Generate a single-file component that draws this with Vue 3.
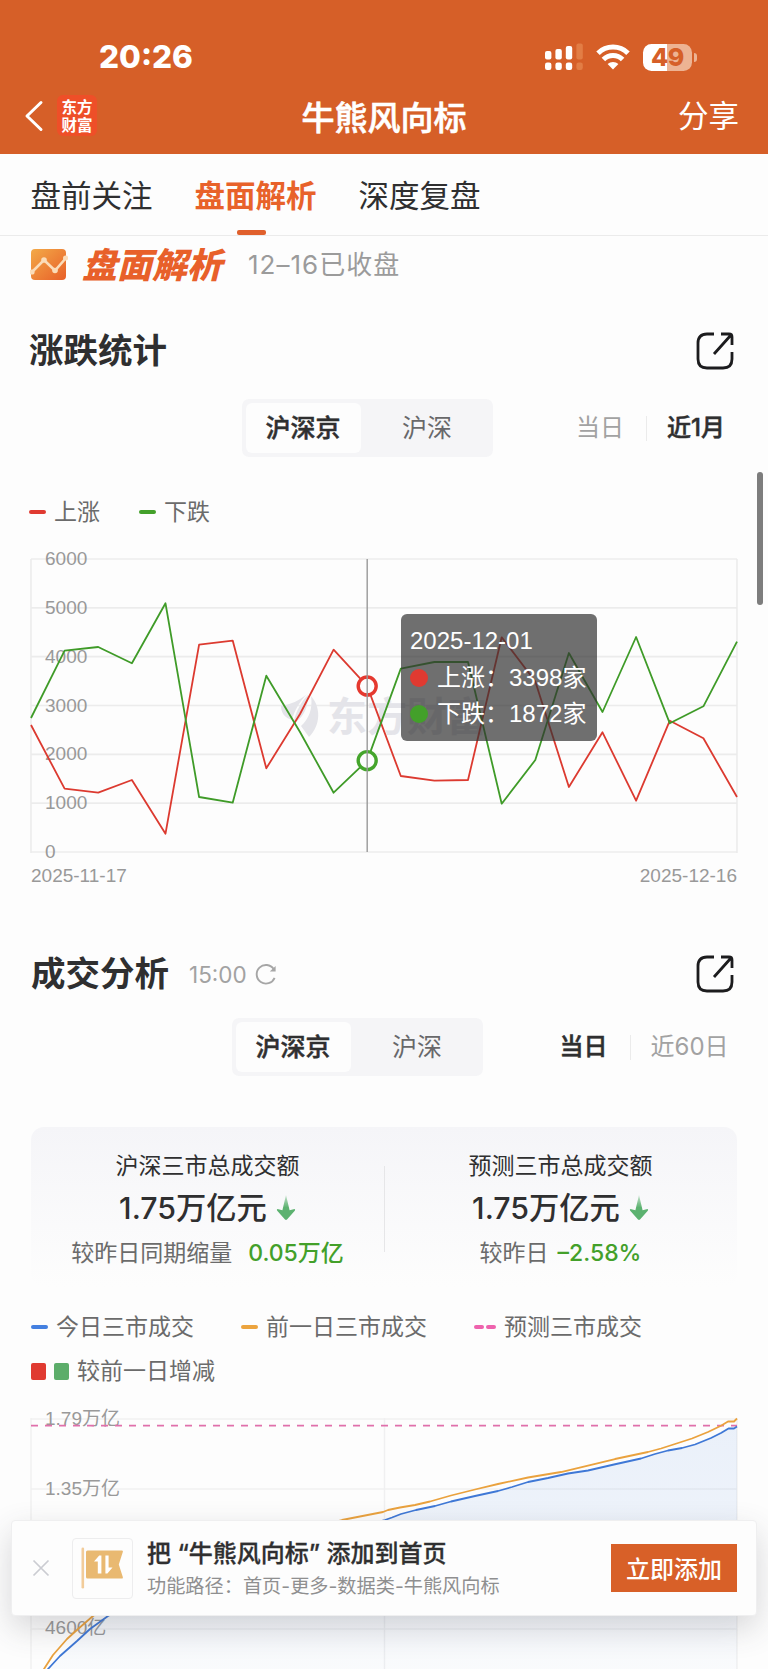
<template>
  <div class="page">
    <header class="header">
      <div class="status-bar">
        <span class="clock">20:26</span>
        <div class="status-icons">
          <svg class="signal" width="39" height="28" viewBox="0 0 39 28">
            <g fill="#fff">
              <rect x="0" y="8" width="6.4" height="8.5" rx="2" />
              <rect x="10.4" y="6" width="6.4" height="10.5" rx="2" />
              <rect x="20.8" y="3" width="6.4" height="13.5" rx="2" />
              <rect x="0" y="19.5" width="6.4" height="7.5" rx="2.2" />
              <rect x="10.4" y="19.5" width="6.4" height="7.5" rx="2.2" />
              <rect x="20.8" y="19.5" width="6.4" height="7.5" rx="2.2" />
            </g>
            <g fill="#e27d45">
              <rect x="31.4" y="0.5" width="6.4" height="16" rx="2" />
              <rect x="31.4" y="19.5" width="6.4" height="7.5" rx="2.2" />
            </g>
          </svg>
          <svg class="wifi" width="34" height="26" viewBox="0 0 34 26">
            <g fill="none" stroke="#fff" stroke-width="5">
              <path d="M2 9.2 A21.5 21.5 0 0 1 32 9.2" />
              <path d="M7.4 15.4 A13.6 13.6 0 0 1 26.6 15.4" />
            </g>
            <path d="M17 25.4 L11.6 20 A8 8 0 0 1 22.4 20 Z" fill="#fff" />
          </svg>
          <div class="battery">
            <span class="battery-text">49</span>
          </div>
          <span class="battery-nub"></span>
        </div>
      </div>
      <div class="nav-bar">
        <div class="nav-left">
          <svg width="20" height="32" viewBox="0 0 20 32">
            <path d="M17 2.5 L3 16 L17 29.5" fill="none" stroke="#fff" stroke-width="3" stroke-linecap="round" stroke-linejoin="round" />
          </svg>
          <div class="logo"><span>东方</span><span>财富</span></div>
        </div>
        <h1 class="nav-title">牛熊风向标</h1>
        <span class="nav-share">分享</span>
      </div>
    </header>

    <nav class="tabs">
      <span
        v-for="tab in tabs"
        :key="tab"
        class="tab"
        :class="{ 'is-active': tab === activeTab }"
        @click="activeTab = tab"
      >{{ tab }}</span>
    </nav>

    <div class="brand">
      <svg class="brand-icon" width="38" height="32" viewBox="0 0 38 32">
        <defs>
          <linearGradient id="brandFill" x1="0" y1="0" x2="1" y2="1">
            <stop offset="0" stop-color="#f3aa48" />
            <stop offset="1" stop-color="#e85f28" />
          </linearGradient>
        </defs>
        <rect x="1" y="0" width="35" height="31" rx="4" fill="url(#brandFill)" />
        <path d="M2 23 L14 11 L25 21.5 L36 9" fill="none" stroke="#fbdcb8" stroke-width="2.6" />
        <g fill="#fbdcb8">
          <circle cx="2" cy="23" r="2.6" />
          <circle cx="14" cy="11" r="2.8" />
          <circle cx="25" cy="21.5" r="2.8" />
          <circle cx="35.6" cy="9" r="2.6" />
        </g>
      </svg>
      <span class="brand-name">盘面解析</span>
      <span class="brand-date">12–16已收盘</span>
    </div>

    <!-- 涨跌统计 -->
    <section class="panel">
      <div class="panel-head">
        <h2>涨跌统计</h2>
        <svg class="open-icon" width="38" height="38" viewBox="0 0 38 38">
          <path d="M18 2 H11 Q2 2 2 11 V27 Q2 36 11 36 H27 Q36 36 36 27 V20 M25 2 H33 Q36 2 36 5 V13 M35 3 L18 22" />
        </svg>
      </div>
      <div class="controls">
        <div class="segment">
          <span class="is-active">沪深京</span>
          <span>沪深</span>
        </div>
        <div class="range">
          <span>当日</span>
          <i></i>
          <span class="is-active">近1月</span>
        </div>
      </div>
      <div class="legend legend-updown">
        <span class="legend-item"><i class="dash red"></i>上涨</span>
        <span class="legend-item"><i class="dash green"></i>下跌</span>
      </div>
      <div class="chart">
        <svg width="768" height="350" viewBox="0 0 768 350">
          <g stroke="#ececec" stroke-width="1.6">
            <line v-for="n in 7" :key="n" x1="31" x2="737" :y1="yAt((n - 1) * 1000)" :y2="yAt((n - 1) * 1000)" />
            <line x1="31" x2="31" y1="18" y2="312" />
            <line x1="737" x2="737" y1="18" y2="312" />
          </g>
          <g fill="#e4e4e9">
            <path d="M281 165 C290 164 300 159 307 153 C300 160 294 170 292 179 C285 177 281 172 281 165 Z" />
            <path d="M308 154 C308 166 304 175 296 181 L294 180 C296 170 301 161 308 154 Z" />
            <path d="M311 155 C321 166 321 184 309 196 L301 185 C309 178 313 167 311 155 Z" />
            <text class="watermark" x="327" y="190">东方财富</text>
          </g>
          <g class="axis-label">
            <text v-for="n in 7" :key="n" x="45" :y="yAt((n - 1) * 1000) + 6">{{ (n - 1) * 1000 }}</text>
            <text x="31" y="341">2025-11-17</text>
            <text x="737" y="341" text-anchor="end">2025-12-16</text>
          </g>
          <polyline class="series" :points="toPoints(up)" stroke="#dc3a30" />
          <polyline class="series" :points="toPoints(down)" stroke="#3f9b28" />
          <circle :cx="xAt(10)" :cy="yAt(up[10])" r="9" fill="#fdfdfd" stroke="#e5392f" stroke-width="3.4" />
          <circle :cx="xAt(10)" :cy="yAt(down[10])" r="9" fill="#fdfdfd" stroke="#45a52c" stroke-width="3.4" />
          <line :x1="xAt(10)" :x2="xAt(10)" y1="18" y2="311" stroke="#999" stroke-width="1.4" />
        </svg>
        <div class="tooltip">
          <div class="tooltip-date">2025-12-01</div>
          <div class="tooltip-row"><i class="dot red"></i>上涨：{{ up[10] }}家</div>
          <div class="tooltip-row"><i class="dot green"></i>下跌：{{ down[10] }}家</div>
        </div>
      </div>
    </section>

    <!-- 成交分析 -->
    <section class="panel panel-volume">
      <div class="panel-head">
        <h2>成交分析</h2>
        <span class="time">15:00</span>
        <svg class="refresh" width="24" height="24" viewBox="0 0 24 24">
          <path d="M19.8 7.2 A9.3 9.3 0 1 0 20.6 15.8" fill="none" stroke="#a6a6a6" stroke-width="1.9" />
          <path d="M21.6 4 V9.6 H15.8 Z" fill="#a6a6a6" />
        </svg>
        <svg class="open-icon" width="38" height="38" viewBox="0 0 38 38">
          <path d="M18 2 H11 Q2 2 2 11 V27 Q2 36 11 36 H27 Q36 36 36 27 V20 M25 2 H33 Q36 2 36 5 V13 M35 3 L18 22" />
        </svg>
      </div>
      <div class="controls">
        <div class="segment">
          <span class="is-active">沪深京</span>
          <span>沪深</span>
        </div>
        <div class="range">
          <span class="is-active">当日</span>
          <i></i>
          <span>近60日</span>
        </div>
      </div>

      <div class="summary">
        <div v-for="card in summary" :key="card.title" class="summary-col">
          <div class="summary-title">{{ card.title }}</div>
          <div class="summary-value">
            {{ card.value }}
            <svg width="20" height="26" viewBox="0 0 20 26">
              <defs>
                <linearGradient id="arrowFill" x1="0" y1="0" x2="0" y2="1">
                  <stop offset="0" stop-color="#5cb270" stop-opacity="0.3" />
                  <stop offset="0.5" stop-color="#5cb270" />
                </linearGradient>
              </defs>
              <path d="M10 0 L13.6 15.2 L18.6 14 Q19.6 14.5 18.8 15.8 L11 24.6 Q10 25.5 9 24.6 L1.2 15.8 Q0.4 14.5 1.4 14 L6.4 15.2 Z" fill="url(#arrowFill)" />
            </svg>
          </div>
          <div class="summary-note" :style="{ gap: card.gap + 'px' }">{{ card.note }}<b>{{ card.diff }}</b></div>
        </div>
      </div>

      <div class="legend legend-volume">
        <span class="legend-item"><i class="dash blue"></i>今日三市成交</span>
        <span class="legend-item"><i class="dash orange"></i>前一日三市成交</span>
        <span class="legend-item"><i class="dash pink"></i><i class="dash pink"></i>预测三市成交</span>
        <span class="legend-item"><i class="block red"></i><i class="block green"></i>较前一日增减</span>
      </div>

      <svg class="volume-chart" width="768" height="270" viewBox="0 1399 768 270">
        <defs>
          <linearGradient id="areaFill" x1="0" y1="1419" x2="0" y2="1690" gradientUnits="userSpaceOnUse">
            <stop offset="0" stop-color="#3f7ddb" stop-opacity="0.1" />
            <stop offset="0.4" stop-color="#3f7ddb" stop-opacity="0.08" />
            <stop offset="1" stop-color="#3f7ddb" stop-opacity="0.01" />
          </linearGradient>
        </defs>
        <g stroke="#f0f0f1" stroke-width="1.5">
          <line v-for="y in [1419, 1489, 1559, 1629]" :key="y" x1="31" x2="737" :y1="y" :y2="y" />
          <line v-for="x in [31, 384.5, 737]" :key="x" :x1="x" :x2="x" y1="1418" y2="1669" />
        </g>
        <g class="axis-label">
          <text x="45" y="1425">1.79万亿</text>
          <text x="45" y="1495">1.35万亿</text>
          <text x="45" y="1634">4600亿</text>
        </g>
        <polygon :points="today + ' 737,1690 31,1690'" fill="url(#areaFill)" />
        <line x1="31" x2="737" y1="1425.6" y2="1425.6" stroke="#e070ab" stroke-width="1.9" stroke-dasharray="7 7" />
        <polyline class="series" :points="previous" stroke="#eaa23e" />
        <polyline class="series" :points="today" stroke="#3f78d6" />
      </svg>
    </section>

    <div class="scrollbar"></div>

    <!-- 底部添加提示 -->
    <div class="banner">
      <svg class="banner-close" width="18" height="18" viewBox="0 0 18 18">
        <path d="M1.5 1.5 L16.5 16.5 M16.5 1.5 L1.5 16.5" stroke="#cbccd2" stroke-width="1.7" />
      </svg>
      <div class="banner-icon">
        <svg width="44" height="42" viewBox="0 0 44 42">
          <rect x="0.5" y="0.5" width="2.6" height="41" rx="1.3" fill="#f2cc9a" />
          <path d="M6.5 3.5 H41 Q42.4 3.5 41.8 5 L37.8 17.5 L41.8 30 Q42.4 31.5 41 31.5 H6.5 Q5 31.5 5 30 V5 Q5 3.5 6.5 3.5 Z" fill="#e9b971" />
          <path d="M13 14.5 L18.2 8.5 H20.4 V26.5 H16.8 V14.5 Z M24.4 8.5 H27.6 V20.5 H31.5 L26.4 26.5 H24.4 Z" fill="#fff" />
        </svg>
      </div>
      <div class="banner-text">
        <div class="banner-title">把 “牛熊风向标” 添加到首页</div>
        <div class="banner-path">功能路径：首页-更多-数据类-牛熊风向标</div>
      </div>
      <button class="banner-btn">立即添加</button>
    </div>
  </div>
</template>

<script setup>
import { ref } from 'vue';

const tabs = ['盘前关注', '盘面解析', '深度复盘'];
const activeTab = ref('盘面解析');

// 近1月每日涨跌家数
const up = [2601, 1296, 1214, 1475, 375, 4246, 4328, 1714, 2826, 4143, 3398, 1556, 1460, 1475, 4397, 3492, 1331, 2451, 1051, 2689, 2329, 1126];
const down = [2744, 4123, 4198, 3865, 5093, 1126, 1010, 3611, 2458, 1214, 1872, 3755, 3891, 3891, 989, 1884, 4075, 2867, 4403, 2636, 2984, 4307];

const xAt = (i) => 31 + (i * 706) / 21;
const yAt = (v) => 311 - (v / 6000) * 293;
const toPoints = (list) => list.map((v, i) => `${xAt(i).toFixed(1)},${yAt(v).toFixed(1)}`).join(' ');

const summary = [
  { title: '沪深三市总成交额', value: '1.75万亿元', note: '较昨日同期缩量', diff: '0.05万亿', gap: 16 },
  { title: '预测三市总成交额', value: '1.75万亿元', note: '较昨日', diff: '–2.58%', gap: 9 },
];

const previous = '31,1690 44,1669 53,1655 67,1639 78,1629 93,1616 130,1594 200,1562 270,1538 342,1520 383,1512 388,1510 400,1507.5 415,1505 430,1501.5 451,1495.5 475,1489.5 498,1484 528,1477.5 561,1472 588,1465.5 615,1459 648,1452 661,1448.5 675,1444 692,1438.5 708,1432 721,1425.7 728,1421.5 734,1421.5 737,1418.5';
const today = '31,1690 48,1669 60,1656 77,1641 90,1629 108,1616 150,1594 220,1566 300,1541 385,1520 392,1517.5 401,1514 416,1510 435,1506 451,1501.5 475,1496 498,1491 512,1487 528,1482 548,1478 568,1473.5 588,1470.5 614,1464.5 641,1458.5 655,1454 668,1450.5 682,1448 695,1444.5 711,1438 721,1433 728.5,1428.5 734,1428.5 737,1426.5';
</script>

<style>
body {
  background: #fdfdfd;
}
</style>

<style scoped>
.page {
  position: relative;
  width: 768px;
  height: 1669px;
  overflow: hidden;
  background: #fdfdfd;
  color: #2f2f30;
  font-family: Inter, "Noto Sans CJK SC", sans-serif;
}

.header {
  height: 154px;
  background: #d65f28;
  color: #fff;
}

.status-bar {
  display: flex;
  justify-content: space-between;
  padding: 37px 71px 0 99px;
  height: 40px;
}

.clock {
  font-size: 31.5px;
  font-weight: 800;
  line-height: 40px;
}

.status-icons {
  display: flex;
  align-items: center;
}

.wifi {
  margin: 0 13px 0 12px;
}

.battery {
  width: 49px;
  height: 27px;
  border-radius: 8.5px;
  background: linear-gradient(90deg, #fff 49%, #edb393 49%);
}

.battery-text {
  display: block;
  text-align: center;
  font-size: 25px;
  font-weight: 800;
  line-height: 27px;
  letter-spacing: -0.5px;
  color: #d65f28;
}

.battery-nub {
  width: 3px;
  height: 9px;
  margin-left: 2px;
  border-radius: 0 4px 4px 0;
  background: #edb393;
}

.nav-bar {
  display: grid;
  grid-template-columns: 1fr auto 1fr;
  align-items: center;
  height: 77px;
  padding: 0 29px 0 24px;
}

.nav-left {
  display: flex;
  align-items: center;
  gap: 13px;
}

.logo {
  display: flex;
  flex-direction: column;
  align-items: center;
  justify-content: center;
  width: 40px;
  height: 41px;
  border-radius: 6px;
  background: #ee4f28;
  font-family: "Noto Sans CJK SC", sans-serif;
  font-size: 15.5px;
  font-weight: 700;
  line-height: 17.5px;
}

.nav-title {
  margin: 5px -2.5px 0 2.5px;
  font-size: 33px;
  font-weight: 500;
  line-height: 40px;
  -webkit-text-stroke: 0.6px currentColor;
}

.nav-share {
  justify-self: end;
  font-size: 30.5px;
  line-height: 40px;
}

.tabs {
  display: flex;
  gap: 42px;
  height: 81px;
  padding-left: 30.5px;
  border-bottom: 1px solid #ebebeb;
}

.tab {
  position: relative;
  font-size: 30.5px;
  line-height: 84px;
}

.tab.is-active {
  color: #e8622a;
  font-weight: 700;
}

.tab.is-active::after {
  content: '';
  position: absolute;
  left: 42px;
  bottom: 0;
  width: 29px;
  height: 5px;
  border-radius: 2px;
  background: #e0602c;
}

.brand {
  display: flex;
  align-items: center;
  height: 57px;
  padding-left: 30px;
}

.brand-name {
  margin-left: 14px;
  font-size: 35px;
  font-weight: 900;
  font-style: italic;
  line-height: 40px;
  color: #e8602a;
}

.brand-date {
  margin-left: 26px;
  font-size: 26px;
  line-height: 40px;
  letter-spacing: 1px;
  color: #9b9b9b;
}

.panel-head {
  display: flex;
  align-items: center;
  height: 40px;
  padding: 38px 34px 0 29px;
}

.panel-head h2 {
  margin: 0;
  font-size: 34.5px;
  font-weight: 700;
  line-height: 40px;
}

.open-icon {
  margin-left: auto;
  fill: none;
  stroke: #1c1c1e;
  stroke-width: 2.8;
}

.controls {
  display: flex;
  height: 58px;
  margin-top: 28px;
  padding-left: 241.5px;
  font-size: 25px;
}

.segment {
  display: flex;
  width: 243px;
  height: 50px;
  padding: 4px;
  border-radius: 7px;
  background: #f5f5f7;
  line-height: 50px;
  text-align: center;
  color: #68686a;
}

.segment span {
  width: 115px;
}

.segment span + span {
  margin-left: 9px;
}

.segment .is-active {
  border-radius: 6px;
  background: #fdfdfd;
  color: #2f2f30;
  font-weight: 500;
  -webkit-text-stroke: 0.5px currentColor;
}

.range {
  display: flex;
  align-items: center;
  margin-left: 83.5px;
  font-size: 24px;
  line-height: 58px;
  color: #a2a2a2;
}

.range i {
  width: 1px;
  height: 25px;
  margin: 0 20px 0 22px;
  background: #ebebeb;
}

.range .is-active {
  color: #2f2f30;
  font-weight: 500;
  -webkit-text-stroke: 0.5px currentColor;
}

.legend {
  display: flex;
  font-size: 23px;
  line-height: 44px;
  color: #6b6b6b;
}

.legend-item {
  display: flex;
  align-items: center;
}

.dash {
  width: 17px;
  height: 4.5px;
  margin-right: 8px;
  border-radius: 2px;
}

.legend-updown {
  gap: 39px;
  margin-top: 33px;
  padding-left: 29px;
}

.red {
  background: #e03a31;
}

.green {
  background: #43a02a;
}

.blue {
  background: #4480e0;
}

.orange {
  background: #eca43e;
}

.pink {
  width: 10px;
  background: #ee62ad;
}

.pink:first-child {
  margin-right: 2px;
}

.block {
  width: 15px;
  height: 17px;
  margin-right: 8px;
  border-radius: 2px;
}

.block.green {
  background: #5cad6a;
}

.chart {
  position: relative;
  height: 350px;
  margin-top: 7px;
}

.chart svg {
  display: block;
}

.axis-label {
  font-family: "Liberation Sans", "Noto Sans CJK SC", sans-serif;
  font-size: 19px;
  fill: #999;
}

.watermark {
  font-size: 40px;
  font-weight: 700;
}

.series {
  fill: none;
  stroke-width: 1.8;
  stroke-linejoin: round;
}

.tooltip {
  position: absolute;
  left: 401px;
  top: 73px;
  width: 187px;
  height: 118px;
  padding: 9px 0 0 9px;
  border-radius: 6px;
  background: rgba(50, 50, 50, 0.7);
  color: #fff;
  font-family: "Liberation Sans", "Noto Sans CJK SC", sans-serif;
  font-size: 24px;
  line-height: 36.5px;
  white-space: nowrap;
}

.tooltip-row {
  display: flex;
  align-items: center;
}

.dot {
  width: 18px;
  height: 18px;
  margin-right: 9px;
  border-radius: 50%;
}

.panel-volume .panel-head {
  padding: 63px 34px 0 31px;
}

.time {
  margin-left: 20px;
  font-size: 22.5px;
  color: #a2a2a2;
}

.refresh {
  margin-left: 7px;
}

.panel-volume .controls {
  margin-top: 24px;
  padding-left: 231.5px;
}

.panel-volume .range {
  margin-left: 77px;
}

.summary {
  display: grid;
  grid-template-columns: 1fr 1fr;
  height: 160px;
  margin: 51px 31px 0;
  border-radius: 13px;
  background: linear-gradient(#f5f5f8, #fdfdfd);
}

.summary-col {
  display: flex;
  flex-direction: column;
  align-items: center;
  position: relative;
}

.summary-col + .summary-col::before {
  content: '';
  position: absolute;
  left: 0;
  top: 39px;
  width: 1px;
  height: 86px;
  background: #e6e6e8;
}

.summary-title {
  margin-top: 19px;
  font-size: 23px;
  line-height: 40px;
}

.summary-value {
  display: flex;
  align-items: center;
  gap: 9px;
  font-size: 30.3px;
  font-weight: 500;
  line-height: 44px;
}

.summary-note {
  display: flex;
  font-size: 23px;
  line-height: 47px;
  color: #6b6b6b;
}

.summary-note b {
  font-weight: 500;
  color: #43a02a;
}

.legend-volume {
  flex-wrap: wrap;
  column-gap: 47px;
  margin-top: 18px;
  padding: 0 31px;
}

.volume-chart {
  display: block;
  margin-top: 6px;
}

.scrollbar {
  position: absolute;
  left: 757px;
  top: 472px;
  width: 6px;
  height: 133px;
  border-radius: 3px;
  background: #7d7d7d;
}

.banner {
  position: absolute;
  left: 11px;
  top: 1520px;
  display: flex;
  align-items: center;
  box-sizing: border-box;
  width: 746px;
  height: 96px;
  padding: 0 19px 0 20px;
  border: 1px solid #efeff0;
  border-radius: 4px;
  background: #fdfdfd;
  box-shadow: 0 12px 32px rgba(60, 60, 70, 0.2);
}

.banner-icon {
  display: flex;
  align-items: center;
  justify-content: center;
  box-sizing: border-box;
  width: 61px;
  height: 61px;
  margin-left: 22px;
  border: 1px solid #ededee;
  border-radius: 4px;
}

.banner-text {
  margin-left: 14px;
  padding-top: 2px;
  white-space: nowrap;
}

.banner-title {
  font-size: 24px;
  font-weight: 500;
  line-height: 34px;
  -webkit-text-stroke: 0.3px currentColor;
}

.banner-path {
  font-size: 19.2px;
  line-height: 30px;
  color: #8f8f90;
}

.banner-btn {
  width: 126px;
  height: 48px;
  margin-left: auto;
  padding: 0 0 2px;
  border: none;
  background: #d86028;
  color: #fff;
  font-family: "Noto Sans CJK SC", sans-serif;
  font-size: 24px;
  font-weight: 500;
}
</style>
